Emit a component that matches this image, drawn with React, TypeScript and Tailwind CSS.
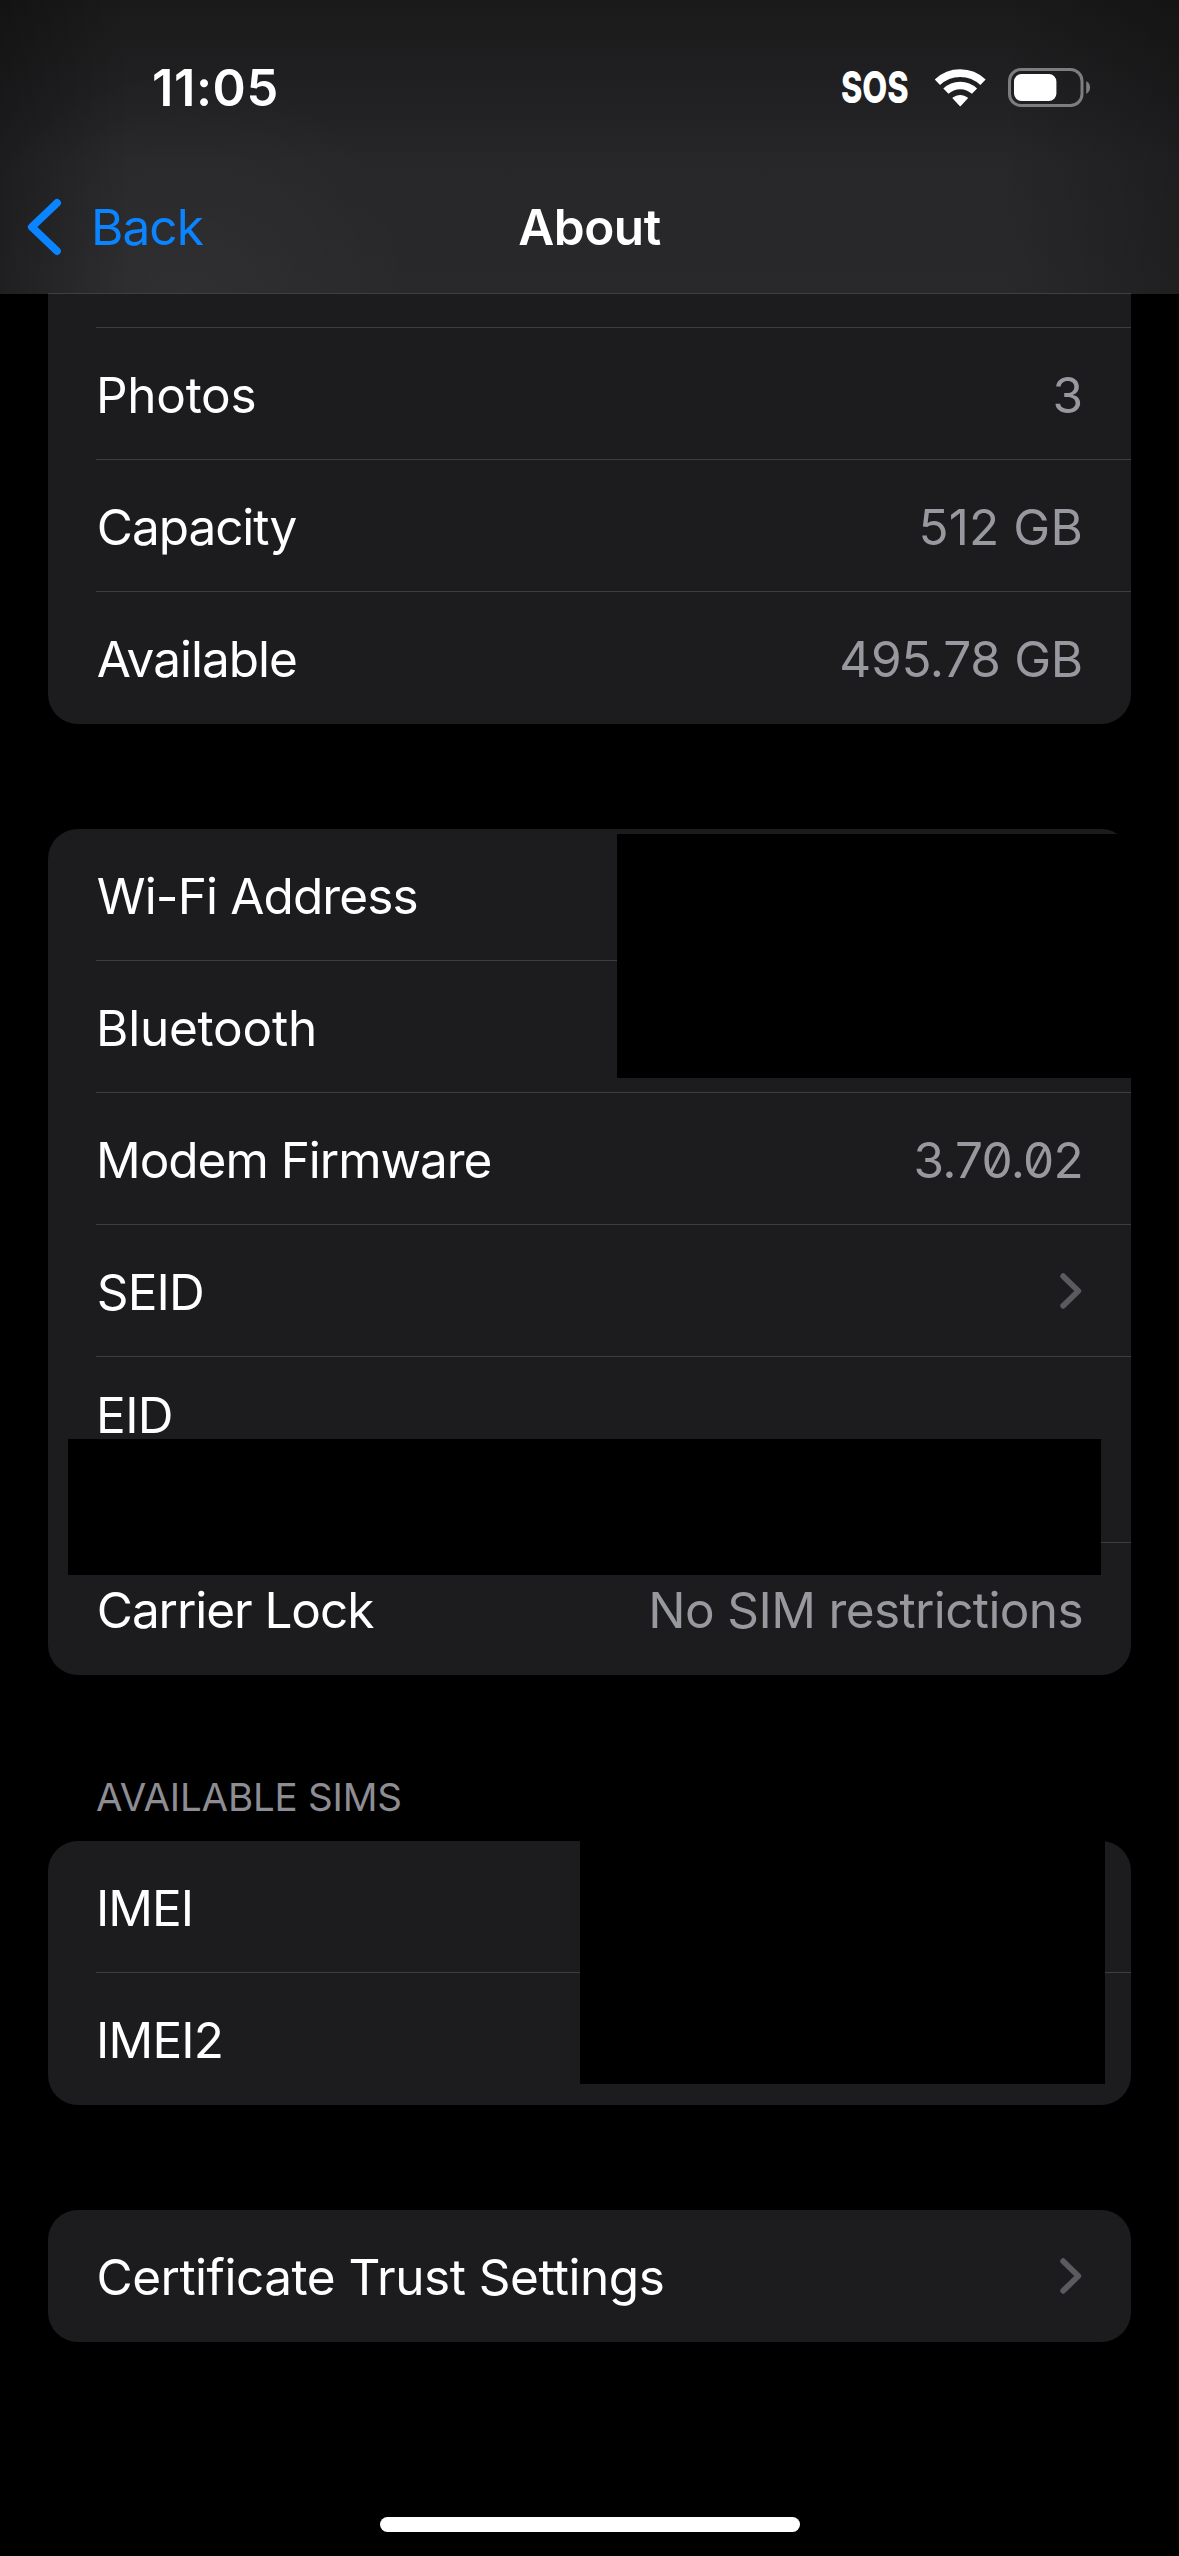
import type { ReactNode } from "react";

function WifiIcon() {
  return (
    <svg className="h-[38px] w-[51px]" viewBox="0 0 51 38" fill="none">
      <path d="M2.4 13.3A33 33 0 0 1 48 13.3" stroke="white" strokeWidth="7.6" />
      <path d="M10.9 22.2A20.6 20.6 0 0 1 39.5 22.2" stroke="white" strokeWidth="7.4" />
      <path
        d="M18.2 29A11.5 11.5 0 0 1 32.2 29L25.2 36.4Z"
        fill="white"
        stroke="white"
        strokeWidth="1.4"
        strokeLinejoin="round"
      />
    </svg>
  );
}

function BatteryIcon() {
  return (
    <svg className="h-[39px] w-[83px]" viewBox="0 0 83 39" fill="none">
      <rect x="1.5" y="1.5" width="72.5" height="36" rx="11.5" stroke="#7d7d7f" strokeWidth="3" />
      <rect x="6" y="6" width="42.4" height="27" rx="7.5" fill="white" />
      <path d="M78.2 13.2c2.4 1 3.9 3.4 3.9 6.3s-1.5 5.3-3.9 6.3z" fill="#7d7d7f" />
    </svg>
  );
}

function Disclosure() {
  return (
    <svg className="mt-[48px] mr-px h-[36px] w-[22px]" viewBox="0 0 22 36" fill="none">
      <path
        d="M3.2 3.2L18.3 18L3.2 32.8"
        stroke="#5a5a5f"
        strokeWidth="5.8"
        strokeLinecap="round"
        strokeLinejoin="round"
      />
    </svg>
  );
}

function Card({ children, className = "" }: { children: ReactNode; className?: string }) {
  return <section className={`relative mx-12 flex flex-col bg-[#1c1c1e] ${className}`}>{children}</section>;
}

type RowProps = {
  label: string;
  labelClass?: string;
  value?: string;
  valueClass?: string;
  disclosure?: boolean;
  last?: boolean;
  tall?: boolean;
};

function Row({ label, labelClass = "", value, valueClass = "", disclosure, last, tall }: RowProps) {
  return (
    <div
      className={`ml-12 flex items-start justify-between pr-12 whitespace-nowrap ${
        tall ? "h-[186px] leading-[116px]" : "h-[132px] leading-[134px]"
      } ${last ? "" : "border-b border-[#3d3d40]"}`}
    >
      <span className={labelClass}>{label}</span>
      {value && <span className={`text-[#98989f] ${valueClass}`}>{value}</span>}
      {disclosure && <Disclosure />}
    </div>
  );
}

export default function App() {
  return (
    <div className="flex h-[2556px] w-[1179px] flex-col overflow-hidden bg-black font-['Inter',sans-serif] text-[49.5px] text-white">
      <header className="flex h-[294px] shrink-0 flex-col bg-[radial-gradient(ellipse_230px_230px_at_185px_290px,rgba(255,255,255,0.03),transparent),linear-gradient(to_right,rgba(0,0,0,0.27),transparent_130px,transparent_1000px,rgba(0,0,0,0.24)),linear-gradient(to_bottom,#1a1a1b,#222224_38%,#272729_55%,#29292b)]">
        <div className="flex h-[162px] items-start pt-[62px]">
          <div className="flex h-[51px] w-full items-center pr-[88px] pl-[152px]">
            <span className="text-[50.5px] leading-[51px] font-semibold tracking-[0.59px]">11:05</span>
            <span className="mr-px ml-auto w-[66px]">
              <span className="block origin-left scale-x-[0.735] text-[44px] leading-[51px] font-extrabold">SOS</span>
            </span>
            <span className="ml-[27px]">
              <WifiIcon />
            </span>
            <span className="ml-[22px]">
              <BatteryIcon />
            </span>
          </div>
        </div>
        <nav className="grid h-[131px] grid-cols-3 items-start leading-[130px]">
          <div className="flex text-[#0a84ff]">
            <svg className="mt-[36px] ml-[26px] h-[58px] w-[36px]" viewBox="0 0 36 58" fill="none">
              <path
                d="M31 5L5.8 29L31 53"
                stroke="currentColor"
                strokeWidth="7.8"
                strokeLinecap="round"
                strokeLinejoin="round"
              />
            </svg>
            <span className="ml-[29px] tracking-[-0.92px]">Back</span>
          </div>
          <h1 className="text-center font-semibold tracking-[-0.5px]">About</h1>
        </nav>
        <div className="mx-12 h-px bg-[#3f3f42]" />
      </header>

      <main className="flex flex-col">
        <Card className="rounded-b-[30px]">
          <div className="ml-12 h-[34px] border-b border-[#3d3d40]" />
          <Row label="Photos" labelClass="tracking-[-0.3px]" value="3" />
          <Row
            label="Capacity"
            labelClass="ml-[0.8px] tracking-[-1.05px]"
            value="512 GB"
            valueClass="tracking-[0.15px]"
          />
          <Row
            label="Available"
            labelClass="ml-[0.8px] tracking-[-1px]"
            value="495.78 GB"
            valueClass="tracking-[-0.27px]"
            last
          />
        </Card>

        <Card className="mt-[105px] rounded-[30px]">
          <Row label="Wi-Fi Address" labelClass="ml-[0.8px] tracking-[-0.88px]" />
          <Row label="Bluetooth" labelClass="tracking-[-0.22px]" />
          <Row
            label="Modem Firmware"
            labelClass="tracking-[-1.03px]"
            value="3.70.02"
            valueClass="tracking-[-0.75px] [font-feature-settings:'zero']"
          />
          <Row label="SEID" labelClass="ml-[0.8px] tracking-[-0.9px]" disclosure />
          <Row label="EID" labelClass="tracking-[-0.6px]" tall />
          <Row
            label="Carrier Lock"
            labelClass="ml-[0.8px] tracking-[-1.07px]"
            value="No SIM restrictions"
            valueClass="tracking-[-0.62px]"
            last
          />
          {/* Covers over the private identifiers */}
          <div className="absolute top-[5px] left-[569px] h-[244px] w-[514px] bg-black" />
          <div className="absolute top-[610px] left-[20px] h-[136px] w-[1033px] bg-black" />
        </Card>

        <h2 className="mt-[97px] mb-[19px] ml-24 text-[38.5px] leading-[50px] tracking-[-0.2px] text-[#8d8d93]">
          AVAILABLE SIMS
        </h2>
        <Card className="rounded-[30px]">
          <Row label="IMEI" labelClass="tracking-[-0.99px]" />
          <Row label="IMEI2" labelClass="tracking-[-0.81px]" last />
          <div className="absolute top-0 left-[532px] h-[243px] w-[525px] bg-black" />
        </Card>

        <Card className="mt-[105px] rounded-[30px]">
          <Row
            label="Certificate Trust Settings"
            labelClass="ml-[0.5px] tracking-[-0.5px]"
            disclosure
            last
          />
        </Card>
      </main>

      <div className="mx-auto mt-auto mb-[24px] h-[15px] w-[420px] shrink-0 rounded-full bg-white" />
    </div>
  );
}
